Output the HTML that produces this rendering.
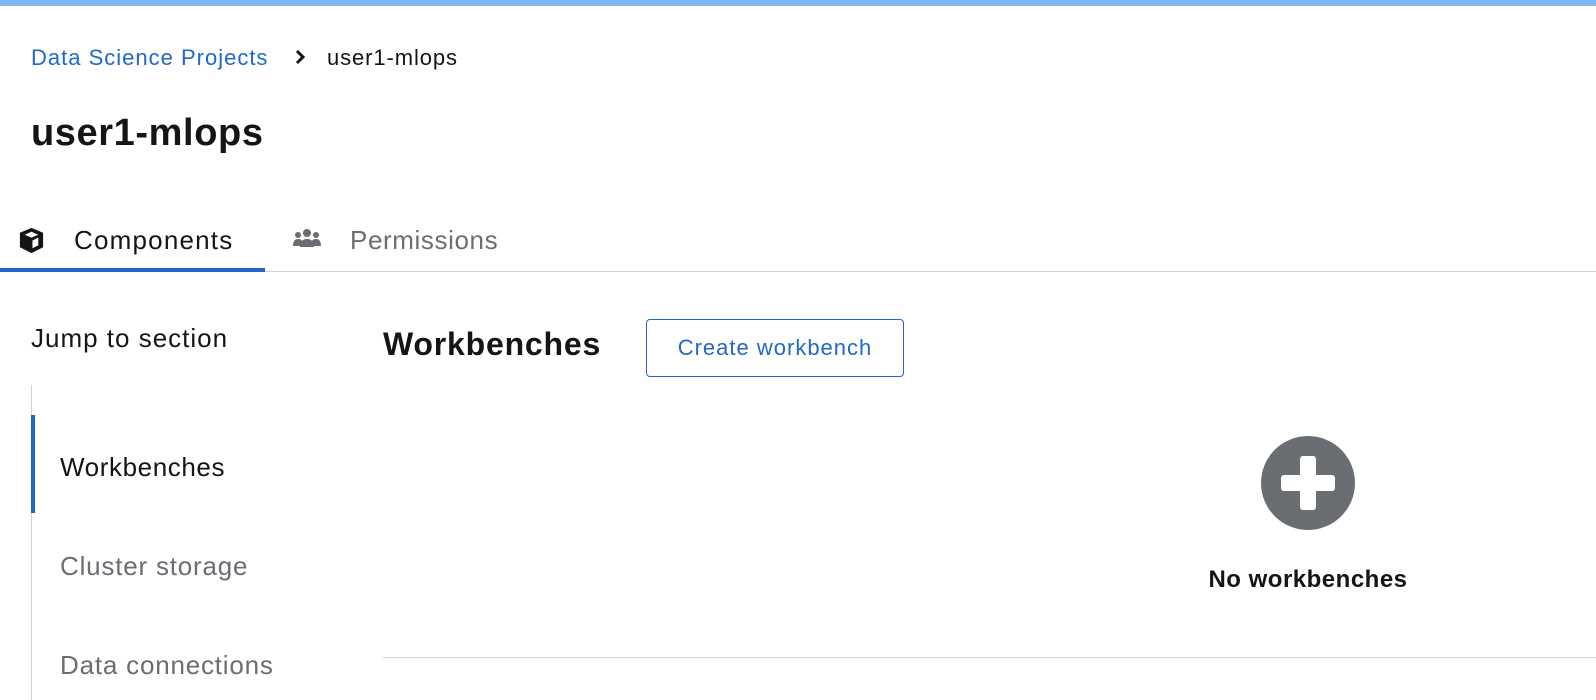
<!DOCTYPE html>
<html><head><meta charset="utf-8"><style>
*{margin:0;padding:0;box-sizing:border-box}
body{width:1596px;height:700px;overflow:hidden;background:#fff;font-family:"Liberation Sans",sans-serif;color:#151515;position:relative}
.a{position:absolute;white-space:nowrap}
</style></head><body>
<div class="a" style="left:0;top:0;width:1596px;height:6px;background:#7fb8ee"></div>
<div class="a" style="left:31px;top:45px;font-size:22px;letter-spacing:1px;color:#2268c8">Data Science Projects</div>
<svg class="a" style="left:294px;top:49px" width="12" height="16" viewBox="0 0 12 16"><path d="M3 2l6 6-6 6" fill="none" stroke="#151515" stroke-width="3"/></svg>
<div class="a" style="left:327px;top:45px;font-size:22px;letter-spacing:0.9px">user1-mlops</div>
<div class="a" style="left:31px;top:112px;font-size:38px;font-weight:bold;letter-spacing:0.6px">user1-mlops</div>
<svg class="a" style="left:17px;top:226px" width="29" height="29" viewBox="0 0 30 30"><path d="M15 2L27 7v15l-12 6-12-6V7z" fill="#151515"/><path d="M8 9l7 3 7-3-7-3z" fill="#fff"/><path d="M16 15l6-3v8l-6 3z" fill="#fff"/></svg>
<div class="a" style="left:74px;top:225px;font-size:26px;letter-spacing:1.2px">Components</div>
<svg class="a" style="left:293px;top:228px" width="28" height="20" viewBox="0 0 28 20"><circle cx="14" cy="5" r="4" fill="#6a6e73"/><circle cx="5" cy="7" r="3" fill="#6a6e73"/><circle cx="23" cy="7" r="3" fill="#6a6e73"/><path d="M7 19c0-6 3-8 7-8s7 2 7 8z" fill="#6a6e73"/><path d="M0 18c0-5 2-7 5-7s4 1 4 3v4z M28 18c0-5-2-7-5-7s-4 1-4 3v4z" fill="#6a6e73"/></svg>
<div class="a" style="left:350px;top:225px;font-size:26px;letter-spacing:0.6px;color:#6a6e73">Permissions</div>
<div class="a" style="left:0;top:271px;width:1596px;height:1px;background:#d2d2d2"></div>
<div class="a" style="left:0;top:268px;width:265px;height:4px;background:#2268c8"></div>
<div class="a" style="left:31px;top:323px;font-size:26px;letter-spacing:1px">Jump to section</div>
<div class="a" style="left:31px;top:385px;width:1px;height:315px;background:#d2d2d2"></div>
<div class="a" style="left:31px;top:415px;width:4px;height:98px;background:#2268c8"></div>
<div class="a" style="left:60px;top:452px;font-size:26px;letter-spacing:0.6px">Workbenches</div>
<div class="a" style="left:60px;top:551px;font-size:26px;letter-spacing:0.8px;color:#6a6e73">Cluster storage</div>
<div class="a" style="left:60px;top:650px;font-size:26px;letter-spacing:0.8px;color:#6a6e73">Data connections</div>
<div class="a" style="left:383px;top:326px;font-size:32px;font-weight:bold;letter-spacing:0.8px">Workbenches</div>
<div class="a" style="left:646px;top:319px;width:258px;height:58px;border:1px solid #2268c8;border-radius:4px;color:#2268c8;font-size:22px;letter-spacing:1px;text-align:center;line-height:56px">Create workbench</div>
<svg class="a" style="left:1261px;top:436px" width="94" height="94" viewBox="0 0 94 94"><circle cx="47" cy="47" r="47" fill="#6a6e73"/><rect x="20" y="39" width="54" height="16" rx="3" fill="#fff"/><rect x="39" y="20" width="16" height="54" rx="3" fill="#fff"/></svg>
<div class="a" style="left:1108px;top:566px;width:400px;text-align:center;font-size:24px;font-weight:bold;letter-spacing:0.5px">No workbenches</div>
<div class="a" style="left:383px;top:657px;width:1213px;height:1px;background:#d2d2d2"></div>
</body></html>
